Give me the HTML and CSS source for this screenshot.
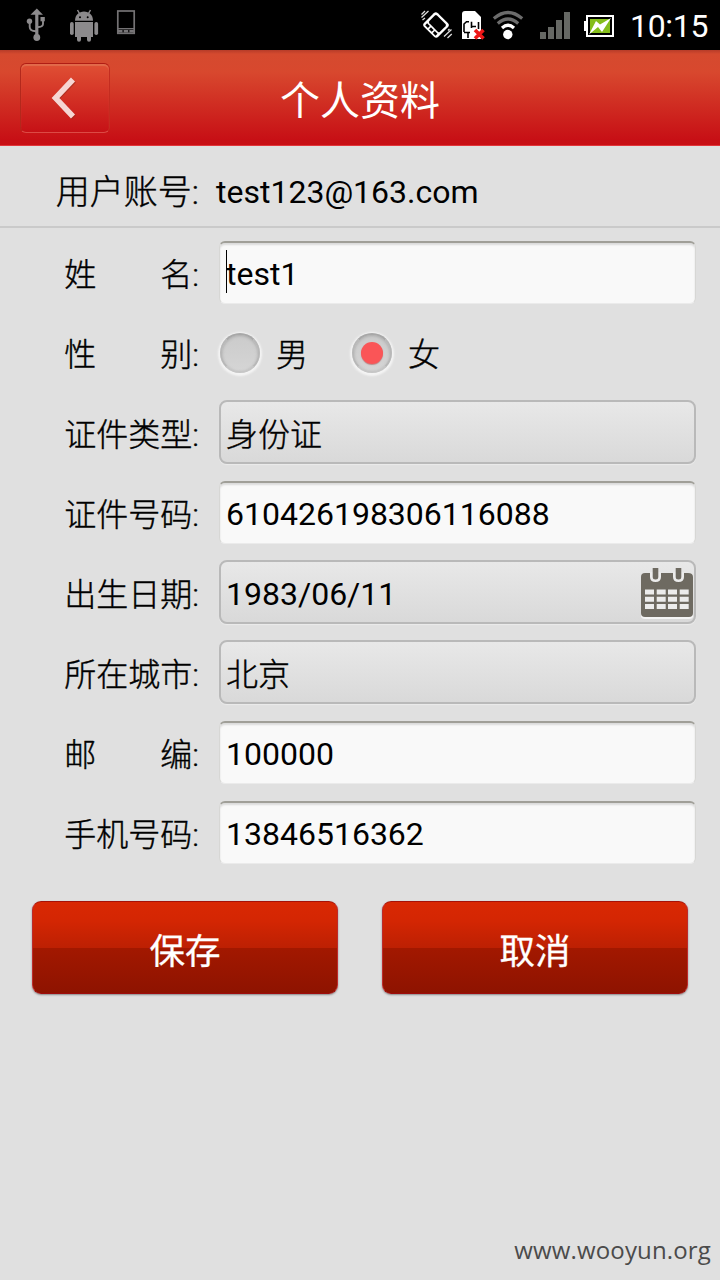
FILE: index.html
```html
<!DOCTYPE html>
<html lang="zh-CN">
<head>
  <meta charset="utf-8">
  <title>个人资料</title>
  <link rel="stylesheet" href="styles.css">
</head>
<body>
  <div class="statusbar">
    <svg class="status-left" width="150" height="50" viewBox="0 0 150 50">
      <!-- usb -->
      <g fill="none" stroke="#8c8a8c" stroke-width="1.9">
        <path d="M36.800 12V36" stroke-width="3.200"/>
        <path d="M29.700 23V27Q29.700 31 36 31.300M43 20V24Q43 27 37 27.300"/>
      </g>
      <path d="M36.800 8.500L43 14.800H30.500Z" fill="#8c8a8c"/>
      <circle cx="29.500" cy="21.300" r="2.700" fill="#8c8a8c"/>
      <rect x="40.500" y="17" width="4.300" height="4.300" fill="#8c8a8c"/>
      <circle cx="36.800" cy="37.500" r="3.400" fill="#8c8a8c"/>
      <!-- android -->
      <g fill="#8c8a8c">
        <path d="M75 20.700C75 15 79 11.500 84 11.500S93 15 93 20.700Z"/>
        <path d="M75 22H93V37H91V39.800A1.900 1.900 0 0 1 87 39.800V37H81V39.800A1.900 1.900 0 0 1 77 39.800V37H75Z"/>
        <rect x="70" y="22" width="3.700" height="13" rx="1.800"/>
        <rect x="94.400" y="22" width="3.700" height="13" rx="1.800"/>
      </g>
      <path d="M77.500 10L79.500 13.500M90.500 10L88.500 13.500" stroke="#8c8a8c" stroke-width="1.500"/>
      <circle cx="80" cy="17.300" r="1" fill="#000"/>
      <circle cx="87.700" cy="17.300" r="1" fill="#000"/>
      <!-- phone -->
      <rect x="117.800" y="11" width="16.400" height="22.300" fill="none" stroke="#747274" stroke-width="1.700"/>
      <path d="M118 28.700H134" stroke="#747274" stroke-width="1.400"/>
      <path d="M118 31.300H134" stroke="#777577" stroke-width="2.400" stroke-dasharray="4.500 1.200"/>
    </svg>
    <svg class="status-right" width="210" height="50" viewBox="410 0 210 50">
      <!-- vibrate -->
      <g transform="rotate(45 436 25)">
        <rect x="426" y="15.300" width="20" height="19.400" rx="3" fill="#fff"/>
        <rect x="428.500" y="17.600" width="15" height="10.800" rx="1.500" fill="#000"/>
        <path d="M428.600 31.500H443.600" stroke="#000" stroke-width="2.800" stroke-dasharray="3.800 1.600"/>
      </g>
      <path d="M421.500 14.500L425 11M421.500 17.500L428.500 11M422.500 20L425 18M444 36.500L451.500 29.500M447.500 38L451.800 34M448 30.500L449.500 29" stroke="#ddd" stroke-width="1.300"/>
      <!-- sim -->
      <path d="M465 11H475L481 17V39H462V14Q462 11 465 11Z" fill="#fff"/>
      <path d="M464 32V24L466.500 21.700H469M471.500 21.700V28M471.500 26.500H476M478.500 22V29M464 32.500H470M468 32V38" fill="none" stroke="#000" stroke-width="1.600"/>
      <path d="M475 30L483.500 38.500M483.500 30L475 38.500" stroke="#ed1717" stroke-width="3.600"/>
      <!-- wifi -->
      <g fill="none" stroke-width="3.200">
        <path d="M493.800 18.500Q508 6.500 522.200 18.500" stroke="#6c6c6c"/>
        <path d="M497.800 23.500Q508 14.500 518.200 23.500" stroke="#6c6c6c"/>
        <path d="M502 28Q508 22.500 514 28" stroke="#fff"/>
      </g>
      <circle cx="507.800" cy="34.500" r="4.700" fill="#fff"/>
      <!-- signal -->
      <path d="M540 32h6v7h-6ZM548 27h6v12h-6ZM556 20h6v19h-6ZM564 12h6v27h-6Z" fill="#666864"/>
      <!-- battery -->
      <rect x="584" y="21" width="3" height="10" fill="#fff"/>
      <rect x="587" y="16" width="26" height="20" fill="#000" stroke="#fff" stroke-width="2"/>
      <rect x="590" y="19" width="20" height="14" fill="#85bd1b"/>
      <path d="M611 18L602 32L598 27L589 34.500L596 21L600 24.500Z" fill="#fff"/>
    </svg>
    <span class="clock">10:15</span>
  </div>

  <div class="header">
    <button type="button" class="back">
      <svg width="88" height="68" viewBox="0 0 88 68">
        <path d="M53 16.500L35 35L53 53.500" fill="none" stroke="#8d2a1c" stroke-opacity=".5" stroke-width="5.500"/>
        <path d="M52 15.500L34.500 34L52 52.500" fill="none" stroke="#f6d6d3" stroke-width="5.600"/>
      </svg>
    </button>
    <h1>个人资料</h1>
  </div>

  <div class="account">
    <span class="account-label">用户账号:</span>
    <span class="account-name">test123@163.com</span>
  </div>

  <form class="profile">
    <div class="row">
      <label for="name">姓　　名:</label>
      <div class="field">
        <input type="text" id="name" class="box" value="test1">
        <span class="caret"></span>
      </div>
    </div>
    <div class="row">
      <label>性　　别:</label>
      <div class="radios">
        <span class="radio"></span><span class="radio-text">男</span>
        <span class="radio checked"></span><span class="radio-text">女</span>
      </div>
    </div>
    <div class="row">
      <label>证件类型:</label>
      <div class="box picker">身份证</div>
    </div>
    <div class="row">
      <label for="idno">证件号码:</label>
      <input type="text" id="idno" class="box" value="610426198306116088">
    </div>
    <div class="row">
      <label>出生日期:</label>
      <div class="box picker date">
        <span>1983/06/11</span>
        <svg class="calendar" width="54" height="54" viewBox="0 0 54 54">
          <path d="M4 8H49Q53 8 53 12V49Q53 52 49 52H5Q1 52 1 49V12Q1 8 4 8Z" fill="#f4f4f4"/>
          <path d="M5 6H48Q53 6 53 10V46Q53 50 49 50H5Q1 50 1 46V10Q1 6 5 6Z" fill="#6e6a61"/>
          <path d="M10 5H21V10Q21 15 15.500 15T10 10ZM33 5H44V10Q44 15 38.500 15T33 10Z" fill="#ececec"/>
          <path d="M12.700 1H18.300V10Q18.300 12.500 15.500 12.500T12.700 10ZM35.700 1H41.300V10Q41.300 12.500 38.500 12.500T35.700 10Z" fill="#6e6a61"/>
          <path d="M5 22.500h9v5h-9zM16.700 22.500h9v5h-9zM28 22.500h9v5h-9zM39.700 22.500h9v5h-9zM5 29.700h9v5h-9zM16.700 29.700h9v5h-9zM28 29.700h9v5h-9zM39.700 29.700h9v5h-9zM5 37h9v5h-9zM16.700 37h9v5h-9zM28 37h9v5h-9zM39.700 37h9v5h-9z" fill="#ececec"/>
        </svg>
      </div>
    </div>
    <div class="row">
      <label>所在城市:</label>
      <div class="box picker">北京</div>
    </div>
    <div class="row">
      <label for="zip">邮　　编:</label>
      <input type="text" id="zip" class="box" value="100000">
    </div>
    <div class="row">
      <label for="mobile">手机号码:</label>
      <input type="text" id="mobile" class="box" value="13846516362">
    </div>
    <div class="actions">
      <button type="button" class="btn">保存</button>
      <button type="button" class="btn">取消</button>
    </div>
  </form>

  <div class="footer">www.wooyun.org</div>
</body>
</html>
```
FILE: styles.css
```css
* {
  box-sizing: border-box;
}
body {
  margin: 0;
  width: 720px;
  height: 1280px;
  display: flex;
  flex-direction: column;
  background: #e0e0e0;
  color: #000;
  font-family: Roboto, "Noto Sans CJK SC", sans-serif;
  font-size: 32px;
  overflow: hidden;
}
svg {
  display: block;
}

.statusbar {
  display: flex;
  height: 50px;
  background: #000;
}
.status-right {
  margin-left: 260px;
}
.clock {
  padding-left: 10px;
  line-height: 52px;
  color: #fff;
  letter-spacing: -.3px;
}

.header {
  display: grid;
  grid-template-columns: 90px 1fr 90px;
  align-items: center;
  height: 96px;
  padding: 0 20px 2px;
  border-bottom: 1px solid #e2353a;
  background: linear-gradient(#b63c29 0, #d54a2f 4px, #d8482e 22px, #c70f15 90px, #c90f14);
}
.back {
  width: 90px;
  height: 70px;
  margin-top: 3px;
  padding: 0;
  border: 1px solid #c43a30;
  border-color: #b01d14 #c42c20 #dc4a45 #b3281c;
  border-radius: 6px;
  background: linear-gradient(#e05034, #c61116);
  box-shadow: inset 0 2px 1px rgba(230, 130, 95, .55);
}
h1 {
  margin: 0;
  padding-top: 11px;
  text-align: center;
  color: #fff;
  font-size: 40px;
  font-weight: 400;
  line-height: 60px;
}

.account {
  display: flex;
  height: 82px;
  border-bottom: 2px solid #cacaca;
  line-height: 92px;
}
.account-label,
label,
.picker,
.radios {
  font-weight: 300;
  -webkit-text-stroke: .4px #000;
}
.account-label {
  width: 199px;
  text-align: right;
  font-size: 34px;
}
.account-name {
  padding-left: 17px;
}

.profile {
  padding-top: 4px;
}
.row {
  display: grid;
  grid-template-columns: 199px 478px;
  column-gap: 19px;
  align-items: center;
  height: 80px;
}
label {
  padding-bottom: 1px;
  text-align: right;
  white-space: nowrap;
}
.field {
  position: relative;
}
.box {
  display: block;
  width: 477px;
  height: 63px;
  margin: 1px 0 0 1px;
  padding: 2px 8px 1px 6px;
  border: 1px solid #d7d7d5;
  border-top: 2px solid #a09f98;
  border-bottom-color: #ebebeb;
  border-radius: 6px;
  background: #f9f9f9;
  box-shadow: inset 0 2px 2px rgba(0, 0, 0, .12);
  color: #000;
  font: inherit;
}
.picker {
  display: flex;
  align-items: center;
  justify-content: space-between;
  height: 64px;
  margin-top: 0;
  padding: 0 0 0 5px;
  border: 2px solid #b9b9b9;
  border-radius: 8px;
  background: linear-gradient(#e8e8e8, #d9d9d9);
  box-shadow: 0 1px 1px #ececec;
  font-weight: 300;
}
.date {
  padding-top: 4px;
  font-weight: 400;
  -webkit-text-stroke: 0;
}
/* text cursor in the focused field */
.caret {
  position: absolute;
  left: 8px;
  top: 10px;
  width: 1px;
  height: 43px;
  background: #000;
}

.radios {
  display: flex;
  align-items: center;
}
.radio {
  display: flex;
  width: 40px;
  height: 40px;
  margin: 1px 16px 0 2px;
  border: 2px solid #b2b2b2;
  border-color: #a8a8a8 #b8b8b8 #c6c6c6;
  border-radius: 50%;
  background: linear-gradient(#cbcbcb, #d5d5d5);
  box-shadow: 0 1px 2px 2px #f4f4f4, inset 0 1px 3px #aaa;
}
.checked::after {
  content: "";
  width: 22px;
  height: 22px;
  margin: auto;
  border-radius: 50%;
  background: #fa5557;
  box-shadow: 0 1px 1px #b88;
}
.radio-text {
  width: 74px;
  padding-bottom: 1px;
}

.actions {
  display: flex;
  gap: 44px;
  padding: 29px 32px 0;
}
.btn {
  width: 306px;
  height: 93px;
  padding: 1px 0 0;
  border: 1px solid #b3161a;
  border-color: #a61208 #bd2a2a #9e0d0d;
  border-radius: 9px;
  background: linear-gradient(#d92803 0, #d42603 20%, #bd2003 50%, #a21800 51%, #8e1300);
  box-shadow: 0 1px 2px #888;
  color: #fff;
  font: 400 35.5px Roboto, "Noto Sans CJK SC", sans-serif;
  -webkit-text-stroke: .3px #fff;
}

.footer {
  margin-top: auto;
  padding: 0 9px 12px;
  text-align: right;
  color: #4b4b4b;
  font-family: "Open Sans", sans-serif;
  font-size: 24px;
  line-height: 36px;
  letter-spacing: .15px;
}
```
